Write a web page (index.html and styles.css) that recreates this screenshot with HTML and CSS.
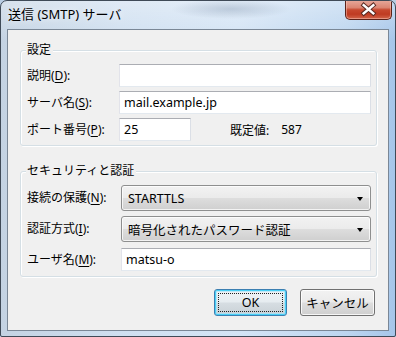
FILE: index.html
```html
<!DOCTYPE html>
<html lang="ja">
<head>
<meta charset="utf-8">
<title>送信 (SMTP) サーバ</title>
<link rel="stylesheet" href="styles.css">
</head>
<body>
<div class="window">
  <div class="titlebar">
    <span class="title">送信 (SMTP) サーバ</span>
    <div class="close">
      <svg width="47" height="19" viewBox="0 0 47 19">
        <path d="M18.5 5 L28.5 13.5 M28.5 5 L18.5 13.5" stroke="#5a2a22" stroke-width="4.6" stroke-linecap="square" fill="none"/>
        <path d="M18.5 5 L28.5 13.5 M28.5 5 L18.5 13.5" stroke="#ffffff" stroke-width="2.6" stroke-linecap="square" fill="none"/>
      </svg>
    </div>
  </div>
  <div class="client">
    <section class="group g1">
      <div class="group-title">設定</div>
      <div class="row">
        <span class="label l1">説明(<u>D</u>):</span>
        <div class="input grow"></div>
      </div>
      <div class="row">
        <span class="label l1">サーバ名(<u>S</u>):</span>
        <div class="input grow">mail.example.jp</div>
      </div>
      <div class="row">
        <span class="label l1">ポート番号(<u>P</u>):</span>
        <div class="input port">25</div>
        <span class="default-label">既定値:</span>
        <span class="default-value">587</span>
      </div>
    </section>
    <section class="group g2">
      <div class="group-title">セキュリティと認証</div>
      <div class="row">
        <span class="label l2">接続の保護(<u>N</u>):</span>
        <div class="combo grow"><span>STARTTLS</span><i class="arrow"></i></div>
      </div>
      <div class="row r-combo2">
        <span class="label l2">認証方式(<u>I</u>):</span>
        <div class="combo grow"><span>暗号化されたパスワード認証</span><i class="arrow"></i></div>
      </div>
      <div class="row r-user">
        <span class="label l2">ユーザ名(<u>M</u>):</span>
        <div class="input grow">matsu-o</div>
      </div>
    </section>
    <div class="buttons">
      <button class="btn ok"><span class="focus">OK</span></button>
      <button class="btn cancel">キャンセル</button>
    </div>
  </div>
</div>
</body>
</html>
```

FILE: styles.css
```css
html, body {
  margin: 0;
  padding: 0;
  background: #b9cde3;
}

body {
  font-family: "Noto Sans", "Noto Sans CJK JP", sans-serif;
  font-size: 12px;
  color: #000;
}

.window {
  width: 396px;
  height: 337px;
  box-sizing: border-box;
  border: 1px solid #3f4a57;
  border-radius: 7px 7px 2px 2px;
  background:
    radial-gradient(ellipse 60px 10px at 230px 8px, rgba(120,140,165,0.35), rgba(120,140,165,0) 100%),
    linear-gradient(to bottom, rgba(255,255,255,0.35), rgba(255,255,255,0) 40px),
    linear-gradient(to right, #c4d3e3 0%, #cfdff0 30%, #d4e4f5 60%, #bcd5ef 88%, #a6c6ea 100%);
  display: flex;
  flex-direction: column;
  overflow: hidden;
}

.titlebar {
  height: 28px;
  display: flex;
  align-items: flex-start;
  padding-left: 7px;
}

.title {
  font-size: 13px;
  line-height: 16px;
  margin-top: 5px;
  color: #000;
  text-shadow: 0 0 6px rgba(255,255,255,0.9);
}

.close {
  margin-left: auto;
  margin-right: 3px;
  margin-top: -1px;
  width: 47px;
  height: 20px;
  box-sizing: border-box;
  border: 1px solid #5b2219;
  border-top: none;
  border-radius: 0 0 5px 5px;
  background: linear-gradient(to bottom, #e8aa9c 0%, #db8572 40%, #c7482e 52%, #bf3b22 75%, #d2654a 100%);
  box-shadow: inset 0 0 0 1px rgba(255,210,200,0.45);
  display: flex;
}

.client {
  flex: 1;
  margin: 0 6px 5px 6px;
  border: 1px solid #7a8796;
  background: #f0f0f0;
  padding: 20px 11px 0 12px;
  display: flex;
  flex-direction: column;
}

.group {
  border: 1px solid #d5dfe5;
  border-radius: 3px;
  padding: 0 5px 4px 6px;
  display: flex;
  flex-direction: column;
  box-shadow: inset 1px 1px 0 #fff, 1px 1px 0 #fff;
}

.g2 {
  margin-top: 25px;
  padding-bottom: 5px;
}

.group-title {
  align-self: flex-start;
  margin: -9px 0 0 -1px;
  padding: 0 2px 0 1px;
  height: 16px;
  line-height: 16px;
  background: #f0f0f0;
}

.row {
  display: flex;
  align-items: center;
  margin-top: 4px;
}

.group-title + .row {
  margin-top: 6px;
}

.r-combo2 { margin-top: 5px; }
.r-user { margin-top: 6px; }

.label {
  flex: none;
  line-height: 16px;
}

.l1 { width: 92px; }
.l2 { width: 94px; }

.label u {
  text-decoration: underline;
  text-underline-offset: 2px;
}

.input {
  height: 23px;
  box-sizing: border-box;
  background: #fff;
  border: 1px solid;
  border-color: #abadb3 #dbdfe6 #e3e9ef #e2e3ea;
  padding: 0 4px;
  line-height: 21px;
  font-size: 12.5px;
  white-space: nowrap;
}

.grow { flex: 1; }

.port { width: 72px; flex: none; }

.default-label {
  margin-left: 39px;
}

.default-value {
  margin-left: 12px;
}

.combo {
  height: 26px;
  box-sizing: border-box;
  border: 1px solid #8e8f8f;
  border-radius: 3px;
  background: linear-gradient(to bottom, #f2f2f2 0%, #ebebeb 48%, #dddddd 52%, #cfcfcf 100%);
  box-shadow: inset 0 0 0 1px rgba(255,255,255,0.75);
  display: flex;
  align-items: center;
  padding: 0 7px 0 6px;
  font-size: 12.5px;
}

.combo span { flex: 1; }

.arrow {
  width: 0;
  height: 0;
  border-left: 3.5px solid transparent;
  border-right: 3.5px solid transparent;
  border-top: 4px solid #000;
  margin-top: 2px;
}

.buttons {
  display: flex;
  justify-content: flex-end;
  gap: 13px;
  margin-top: 12px;
  padding-right: 2px;
}

.btn {
  height: 27px;
  box-sizing: border-box;
  font-family: "Noto Sans", "Noto Sans CJK JP", sans-serif;
  font-size: 12.5px;
  color: #000;
  border-radius: 3px;
  padding: 0;
  display: flex;
  align-items: center;
  justify-content: center;
}

.cancel {
  width: 75px;
  border: 1px solid #707070;
  background: linear-gradient(to bottom, #f2f2f2 0%, #ebebeb 48%, #dddddd 52%, #cfcfcf 100%);
  box-shadow: inset 0 0 0 1px rgba(255,255,255,0.8);
}

.ok {
  width: 73px;
  border: 1px solid #3c7fb1;
  background: linear-gradient(to bottom, #eef3f6 0%, #e6ecf0 48%, #d6dde2 52%, #c9d1d6 100%);
  box-shadow: inset 0 0 0 1px #48d0f6, inset 0 0 0 2px rgba(160,225,250,0.6);
}

.focus {
  width: 65px;
  height: 19px;
  box-sizing: border-box;
  border: 1px dotted #222;
  display: flex;
  align-items: center;
  justify-content: center;
}
```
